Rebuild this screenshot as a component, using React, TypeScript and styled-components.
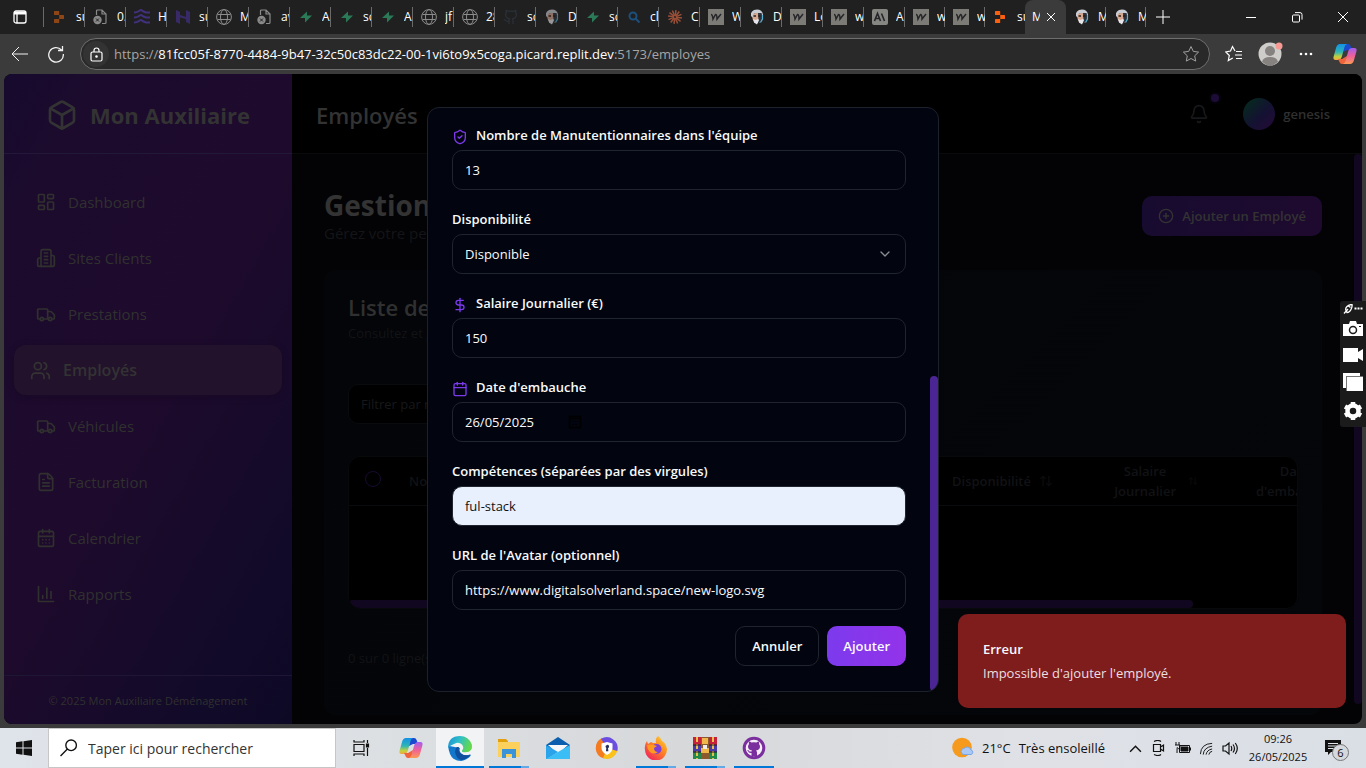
import React from "react";
import styled, { createGlobalStyle, css } from "styled-components";
import {
  ArrowUpDown,
  Bell,
  Box,
  Calendar,
  CalendarDays,
  ChevronDown,
  DollarSign,
  FileText,
  Github,
  LayoutDashboard,
  CirclePlus,
  ShieldCheck,
  Users,
} from "lucide-react";

const GlobalStyle = createGlobalStyle`
  *, *::before, *::after { box-sizing: border-box; }
  html, body { margin: 0; padding: 0; background: #3b3b3b; }
  body, button, input, select {
    font-family: "Open Sans", "Noto Sans", "Liberation Sans", sans-serif;
  }
  button { border: 0; padding: 0; background: none; color: inherit; cursor: pointer; }
  a { color: inherit; text-decoration: none; }
  svg { display: block; flex: none; }
`;

/* ---------- Browser chrome ---------- */

const Desktop = styled.div`
  display: flex;
  flex-direction: column;
  height: 100vh;
  min-height: 640px;
  overflow: hidden;
  background: #3b3b3b;
`;

const TabStrip = styled.header`
  display: flex;
  align-items: stretch;
  height: 34px;
  flex: none;
  background: #202020;
  color: #fff;
`;

const WorkspaceButton = styled.button`
  display: grid;
  place-items: center;
  width: 44px;
  padding-right: 4px;
  background: linear-gradient(#6a6a6a, #6a6a6a) right center / 1px 20px no-repeat;
`;

const Tab = styled.button<{ $narrow?: boolean; $plain?: boolean }>`
  display: flex;
  align-items: center;
  gap: 8px;
  width: ${(p) => (p.$narrow ? 40 : 41)}px;
  flex: none;
  overflow: hidden;
  padding-left: 8px;
  font-size: 12px;
  white-space: nowrap;
  color: #fff;
  background: linear-gradient(${(p) => (p.$plain ? "transparent, transparent" : "#6a6a6a, #6a6a6a")})
    right center / 1px 20px no-repeat;
`;

const TabLabel = styled.span`
  width: 8px;
  overflow: hidden;
  line-height: 18px;
  text-align: left;
`;

const ActiveTab = styled.div`
  display: flex;
  align-items: center;
  gap: 6px;
  width: 41px;
  flex: none;
  padding-left: 7px;
  border-radius: 8px 8px 0 0;
  background: #3b3b3b;
  font-size: 12px;
`;

const NewTab = styled.button`
  display: grid;
  place-items: center;
  width: 34px;
`;

const WindowButtons = styled.div`
  display: flex;
  margin-left: auto;
`;

const WindowButton = styled.button`
  display: grid;
  place-items: center;
  width: 46px;
`;

const Toolbar = styled.div`
  display: flex;
  align-items: center;
  height: 40px;
  flex: none;
  background: #3b3b3b;
  color: #f2f2f2;
`;

const ToolButton = styled.button<{ $width?: number }>`
  display: grid;
  place-items: center;
  width: ${(p) => p.$width ?? 36}px;
  height: 32px;
`;

const NavButtons = styled.div`
  display: flex;
  padding: 0 4px 0 2px;
`;

const AddressBar = styled.form`
  display: flex;
  align-items: center;
  flex: 1;
  height: 32px;
  margin: 0 6px 0 2px;
  padding: 0 9px 0 2px;
  border: 1px solid #6e6e6e;
  border-radius: 16px;
  background: #292929;
`;

const LockBadge = styled.span`
  display: grid;
  place-items: center;
  width: 26px;
  height: 26px;
  border-radius: 50%;
  background: #333;
`;

const UrlText = styled.a`
  flex: 1;
  margin-left: 5px;
  font-size: 13px;
  line-height: 20px;
  color: #a6a6a6;
  white-space: nowrap;
  b { font-weight: 400; color: #fff; }
`;

/* ---------- Page viewport ---------- */

const Viewport = styled.div`
  position: relative;
  display: flex;
  flex: 1;
  min-height: 0;
  margin: 0 4px 4px;
  border-radius: 8px;
  overflow: hidden;
  background: #030305;
`;

const Sidebar = styled.aside`
  display: flex;
  flex-direction: column;
  width: 288px;
  flex: none;
  color: #30312f;
  background: linear-gradient(120deg, #160a2e 0%, #1c0b2d 14%, #1e0a2c 50%, #120a29 84%, #0d0925 100%);
`;

const Brand = styled.div`
  display: flex;
  align-items: center;
  justify-content: center;
  gap: 12px;
  height: 80px;
  padding-top: 2px;
  border-bottom: 1px solid #221838;
  font-size: 22px;
  font-weight: 700;
  line-height: 32px;
  color: #333;
`;

const Nav = styled.nav`
  display: flex;
  flex: 1;
  flex-direction: column;
  gap: 8px;
  padding: 24px 16px;
`;

const NavItem = styled.a<{ $active?: boolean }>`
  display: flex;
  align-items: center;
  gap: 12px;
  height: 48px;
  padding: 0 16px;
  border-radius: 12px;
  font-size: 15px;
  line-height: 24px;
  ${(p) =>
    p.$active &&
    css`
      height: 50px;
      margin: -1px -6px;
      background: #22122b;
      box-shadow: 0 2px 6px #1a0927;
      font-size: 16px;
      font-weight: 600;
      color: #333;
    `}
`;

const SidebarFooter = styled.footer`
  height: 49px;
  border-top: 1px solid #1f1636;
  font-size: 11px;
  line-height: 50px;
  text-align: center;
`;

const Content = styled.div`
  display: flex;
  flex: 1;
  flex-direction: column;
  min-width: 0;
`;

const TopBar = styled.header`
  display: flex;
  align-items: center;
  height: 80px;
  flex: none;
  padding: 0 32px 0 24px;
  border-bottom: 1px solid #0a0a0c;
  background: #000;
`;

const TopTitle = styled.h1`
  flex: 1;
  margin: 0;
  padding-top: 2px;
  font-size: 22px;
  font-weight: 600;
  line-height: 32px;
  color: #333;
`;

const BellButton = styled.button`
  position: relative;
  display: grid;
  place-items: center;
  width: 40px;
  height: 40px;
  margin-right: 24px;
  color: #17181b;
`;

const BellDot = styled.span`
  position: absolute;
  top: 0;
  right: 0;
  width: 8px;
  height: 8px;
  border-radius: 50%;
  background: #1c0c38;
  box-shadow: 0 0 0 2px #05030a;
`;

const Profile = styled.button`
  display: flex;
  align-items: center;
  gap: 8px;
  font-size: 13px;
  font-weight: 600;
  color: #303030;
`;

const Avatar = styled.span`
  width: 32px;
  height: 32px;
  border-radius: 50%;
  background: linear-gradient(135deg, #05291e 10%, #141232 55%, #240a38 95%);
`;

const Scroller = styled.div`
  display: flex;
  flex: 1;
  min-height: 0;
`;

const Page = styled.main`
  flex: 1;
  min-width: 0;
  padding: 32px;
`;

const PageThumb = styled.span`
  width: 8px;
  margin-bottom: 20px;
  border-radius: 4px;
  background: #120720;
`;

const PageHead = styled.div`
  display: flex;
  align-items: center;
  justify-content: space-between;
  height: 64px;
`;

const PageHeading = styled.div`
  padding-bottom: 4px;
`;

const PageTitle = styled.h2`
  margin: 0;
  font-size: 28px;
  font-weight: 700;
  line-height: 34px;
  color: #333;
`;

const PageLead = styled.p`
  margin: 0;
  font-size: 15px;
  line-height: 22px;
  color: #141518;
`;

const AddEmployee = styled.button`
  display: flex;
  align-items: center;
  gap: 8px;
  height: 40px;
  padding: 0 16px;
  margin-bottom: 4px;
  border-radius: 10px;
  background: linear-gradient(90deg, #180b30, #1e0a2e);
  font-size: 13px;
  font-weight: 600;
  color: #333;
`;

const Card = styled.section`
  margin-top: 20px;
  padding: 24px;
  padding-bottom: 44px;
  border-radius: 12px;
  background: linear-gradient(135deg, #030508, #050609);
`;

const CardTitle = styled.h3`
  margin: 0;
  font-size: 22px;
  font-weight: 600;
  line-height: 26px;
  color: #303030;
`;

const CardLead = styled.p`
  margin: 2px 0 40px;
  font-size: 13px;
  line-height: 22px;
  color: #121316;
`;

const Filter = styled.input`
  display: block;
  width: 384px;
  height: 40px;
  padding: 0 12px;
  border: 1px solid #0a0b0e;
  border-radius: 10px;
  background: #000;
  font-size: 13px;
  color: #333;
  &::placeholder { color: #17181b; opacity: 1; }
`;

const TableBox = styled.div`
  height: 153px;
  margin-top: 32px;
  border: 1px solid #08090b;
  border-radius: 12px;
  background: #000;
  overflow: hidden;
  display: flex;
  flex-direction: column;
`;

const TableScroll = styled.div`
  flex: 1;
  overflow: hidden;
`;

const Table = styled.table`
  width: calc(100% + 104px);
  table-layout: fixed;
  border-collapse: collapse;
`;

const Th = styled.th<{ $width?: number }>`
  width: ${(p) => (p.$width ? p.$width + "px" : "auto")};
  height: 48px;
  padding: 0 12px;
  border-bottom: 1px solid #0a0b0d;
  font-size: 13px;
  font-weight: 600;
  line-height: 20px;
  text-align: left;
  color: #111215;
`;

const Sortable = styled.span<{ $align?: string }>`
  display: flex;
  align-items: center;
  justify-content: ${(p) => p.$align ?? "flex-start"};
  gap: ${(p) => (p.$align === "flex-end" ? 12 : 8)}px;
  text-align: center;
  svg { color: #0c0d0f; }
`;

const RoundCheck = styled.input`
  appearance: none;
  display: block;
  width: 16px;
  height: 16px;
  margin: 0 0 4px 4px;
  border: 1px solid #180b30;
  border-radius: 50%;
`;

const TableThumb = styled.span`
  width: 89%;
  height: 8px;
  border-radius: 4px;
  background: #120720;
`;

const Selection = styled.p`
  margin: 36px 0 0;
  font-size: 13px;
  line-height: 26px;
  color: #121316;
`;

/* ---------- Dialog ---------- */

const DialogLayer = styled.div`
  position: absolute;
  inset: 0;
  display: grid;
  place-items: center;
`;

const Dialog = styled.div`
  display: flex;
  width: 512px;
  height: 90%;
  border: 1px solid #1c212c;
  border-radius: 12px;
  background: #02050f;
  overflow: hidden;
  color: #f8fafc;
`;

const Form = styled.form`
  display: flex;
  flex: 1;
  flex-direction: column;
  justify-content: flex-end;
  gap: 16px;
  padding: 0 24px 25px;
`;

const Field = styled.div`
  display: flex;
  flex-direction: column;
  height: 68px;
`;

const Label = styled.label`
  display: flex;
  align-items: center;
  gap: 8px;
  height: 28px;
  padding-bottom: 2px;
  font-size: 13px;
  font-weight: 600;
  line-height: 20px;
  svg { color: #7c3aed; position: relative; top: 2px; }
`;

const ControlBox = styled.div<{ $filled?: boolean }>`
  display: flex;
  align-items: center;
  height: 40px;
  padding: 0 12px;
  border: 1px solid #20242e;
  border-radius: 10px;
  background: ${(p) => (p.$filled ? "#e8f0fe" : "transparent")};
  color: ${(p) => (p.$filled ? "#111" : "#f8fafc")};
`;

const control = css`
  min-width: 0;
  height: 38px;
  padding: 0;
  border: 0;
  outline: 0;
  background: transparent;
  font-size: 13px;
  color: inherit;
`;

const TextInput = styled.input<{ $short?: boolean }>`
  ${control}
  ${(p) => (p.$short ? "width: 102px;" : "flex: 1;")}
`;

const Select = styled.select`
  ${control}
  flex: 1;
  appearance: none;
`;

const Actions = styled.div`
  display: flex;
  justify-content: flex-end;
  gap: 8px;
`;

const ActionButton = styled.button<{ $primary?: boolean }>`
  height: 40px;
  padding: 0 16px;
  border: ${(p) => (p.$primary ? "0" : "1px solid #20242e")};
  border-radius: 10px;
  background: ${(p) => (p.$primary ? "linear-gradient(90deg, #7c3aed, #9333ea)" : "transparent")};
  font-size: 13px;
  font-weight: 600;
  color: #f8fafc;
`;

const DialogTrack = styled.div`
  display: flex;
  flex-direction: column;
  justify-content: flex-end;
  width: 8px;
`;

const DialogThumb = styled.span`
  height: 54%;
  border-radius: 4px;
  background: #4c2594;
`;

const Toast = styled.div`
  position: absolute;
  right: 16px;
  bottom: 16px;
  width: 388px;
  padding: 23px 25px;
  border-radius: 10px;
  background: #7f1d1d;
  font-size: 13px;
  line-height: 24px;
  color: #f8fafc;
`;

const ToastTitle = styled.strong`
  display: block;
  font-weight: 600;
`;

const ToastText = styled.span`
  display: block;
  color: #ecdfe0;
`;

const CaptureBar = styled.div`
  position: fixed;
  right: 0;
  top: 301px;
  display: flex;
  flex-direction: column;
  align-items: center;
  gap: 11px;
  width: 26px;
  height: 126px;
  padding: 3px 2px 6px;
  border-radius: 3px 0 0 3px;
  background: #1b1b1b;
  color: #fff;
`;

const CaptureHandle = styled.span`
  height: 6px;
`;

/* ---------- Taskbar ---------- */

const Taskbar = styled.footer`
  display: flex;
  align-items: stretch;
  height: 40px;
  flex: none;
  background: linear-gradient(90deg, #dfe3ea, #dcdfe2 30%, #d6d8da 50%, #dfe1e6 75%, #dadfe6);
  color: #111;
`;

const TaskButton = styled.button<{ $width?: number; $active?: boolean; $running?: boolean; $more?: boolean }>`
  display: grid;
  place-items: center;
  width: ${(p) => p.$width ?? 49}px;
  background: ${(p) =>
    p.$active
      ? "linear-gradient(#0078d7, #0078d7) center bottom / 100% 2px no-repeat, #f2f3f4"
      : p.$more
        ? "linear-gradient(90deg, #0078d7 80%, #62a9e6 80%) center bottom / 40px 2px no-repeat"
        : p.$running
          ? "linear-gradient(#0078d7, #0078d7) center bottom / 40px 2px no-repeat"
          : "transparent"};
`;

const TaskSearch = styled.label`
  display: flex;
  align-items: center;
  gap: 10px;
  width: 288px;
  padding-left: 11px;
  border: 1px solid #c6c6c6;
  background: #fff;
`;

const TaskSearchInput = styled.input`
  flex: 1;
  min-width: 0;
  padding: 0;
  border: 0;
  outline: 0;
  background: transparent;
  font-size: 14px;
  &::placeholder { color: #333; opacity: 1; }
`;

const Tray = styled.div`
  display: flex;
  align-items: center;
  margin-left: auto;
  padding-right: 17px;
`;

const Weather = styled.button`
  display: flex;
  align-items: center;
  gap: 8px;
  margin-right: 24px;
  font-size: 13px;
  color: #111;
`;

const TrayIcons = styled.div`
  display: flex;
  align-items: center;
  gap: 8px;
`;

const Clock = styled.time`
  width: 78px;
  font-size: 11px;
  line-height: 18px;
  text-align: center;
`;

const Notifications = styled.button`
  position: relative;
  margin-left: 8px;
  width: 24px;
  height: 24px;
`;

const NotificationCount = styled.span`
  position: absolute;
  left: 7px;
  top: 8px;
  width: 17px;
  height: 17px;
  border: 1px solid #777;
  border-radius: 50%;
  background: #d5d8dc;
  font-size: 11px;
  line-height: 15px;
  text-align: center;
`;

/* ---------- Drawings ---------- */

type FavKind =
  | "replit" | "replitOn" | "file" | "waves" | "hbar" | "globe" | "bolt"
  | "github" | "face" | "faceOn" | "search" | "burst" | "zig" | "slash";

const burstAngles = [0, 30, 60, 90, 120, 150, 180, 210, 240, 270, 300, 330];

function Favicon({ kind }: { kind: FavKind }) {
  if (kind === "globe") {
    return (
      <svg width="16" height="16" viewBox="0 0 16 16" fill="none" stroke="#8c8c8c">
        <circle cx="8" cy="8" r="7.400" />
        <ellipse cx="8" cy="8" rx="3.500" ry="7.400" />
        <path d="M1.500 5.500h13M1.500 10.500h13" />
      </svg>
    );
  }
  if (kind === "github") return <Github size={16} color="#2a3038" />;
  return (
    <svg width="16" height="16" viewBox="0 0 16 16" fill="none">
      {(kind === "replit" || kind === "replitOn") && (
        <path
          fill={kind === "replit" ? "#8f4617" : "#fb6010"}
          d="M2 2.600c0-.4.3-.6.6-.6h4c.4 0 .6.2.6.6V6H2.600Q2 6 2 5.400zM7.200 6h4.200c.4 0 .6.2.6.6v2.800c0 .4-.2.6-.6.600H7.200zM2 10.600c0-.4.3-.6.6-.6h4.600v3.400c0 .4-.2.600-.6.600h-4c-.3 0-.6-.2-.6-.600z"
        />
      )}
      {kind === "search" && (
        <>
          <circle cx="7" cy="7" r="3.500" stroke="#1d4f7c" strokeWidth="2" />
          <path d="m9.500 9.500 4 4" stroke="#1d4f7c" strokeWidth="2" />
        </>
      )}
      {kind === "file" && (
        <>
          <path d="M3.500 6V2q0-1 1-1H9l4 4v8.500q0 1-1 1H9M9 1v4h4" stroke="#8a8a8a" strokeWidth="1.200" />
          <circle cx="4.500" cy="11" r="4.200" fill="#8a8a8a" />
          <path d="m3 9.500 3 3m0-3-3 3" stroke="#202020" />
        </>
      )}
      {kind === "waves" && (
        <path d="M0 3.500q3 0 5-1.500t3-.5 4 2h4M0 8.500q3 0 5-1.500t3-.5 4 2h4M0 13.500q3 0 5-1.500t3-.5 4 2h4" stroke="#41307c" strokeWidth="2" />
      )}
      {kind === "hbar" && (
        <path fill="#382a66" d="M1 1l4 2v3l6 2V1l4 2v12l-4-2v-3L5 8.500V15l-4-2z" />
      )}
      {kind === "bolt" && <path fill="#2a7a58" d="M9 2.500v4h5l-7 7v-4.500H2z" />}
      {(kind === "face" || kind === "faceOn") && (
        <g opacity={kind === "face" ? 0.6 : 1}>
          <path fill="#c9ccd2" d="M2 7Q1 1 8 .500q5 0 6 5l-1 3-2-4H5L4 9z" />
          <path fill="#d9a890" d="M4 5q4-2 8 0l.5 5-2 4H6L3.500 10z" />
          <path fill="#2b3440" d="M9 4h3.500l1 4-2 5-3 2 1-4z" />
          <path d="M4.500 7h2.500M9 7h2.500" stroke="#2a1c1a" strokeWidth="1.300" />
          <path fill="#e6e6ea" d="M4 10l2.500 1L9 10l1 1-2 4.500-3-2z" />
          <path d="M13.500 6v4l-2 3.500" stroke="#58b4d4" strokeWidth="1.200" />
        </g>
      )}
      {kind === "burst" &&
        burstAngles.map((a) => (
          <path key={a} d="M8 7V1" stroke="#9a4f38" strokeWidth="1.500" transform={`rotate(${a + 8} 8 8)`} />
        ))}
      {kind === "zig" && (
        <>
          <path fill="#7d7b76" d="M0 0h16v16H0z" />
          <path d="M3 5.500q1.500 0 2 4.500l2.500-4.500q1.500 0 1.500 4.500l4-5" stroke="#26262a" strokeWidth="1.500" />
        </>
      )}
      {kind === "slash" && (
        <>
          <rect width="16" height="16" rx="2" fill="#868683" />
          <path d="M2.500 12 5.500 4.500l3 7.500M4 9.500h3.500M9.500 4.500l3 7.500" stroke="#26262a" strokeWidth="1.600" />
        </>
      )}
    </svg>
  );
}

function Copilot() {
  return (
    <svg width="24" height="24" viewBox="0 0 24 24">
      <defs>
        <linearGradient id="cpA" x1="0" y1="0" x2="0" y2="1">
          <stop offset="0" stopColor="#1391e6" />
          <stop offset=".5" stopColor="#2fb5b5" />
          <stop offset=".8" stopColor="#c6d23c" />
          <stop offset="1" stopColor="#f0a53a" />
        </linearGradient>
        <linearGradient id="cpB" x1="0" y1="0" x2="0" y2="1">
          <stop offset="0" stopColor="#a05ef0" />
          <stop offset=".5" stopColor="#f0609a" />
          <stop offset="1" stopColor="#fb9a55" />
        </linearGradient>
      </defs>
      <path fill="#1a49d0" d="M11 2h4q2 0 2.600 2L19 8h-5l-4 2z" />
      <path fill="url(#cpA)" d="M7 2h7q-2 1-2.500 3L9 14q-1 4-4 4H2.500Q0 18 .500 15L3 6q1-4 4-4z" />
      <path fill="#f0643c" d="M13 22H9q-2 0-2.500-2L5 17h4l5-3z" />
      <path fill="url(#cpB)" d="M17 22h-7q2-1 2.500-3L15 10q1-4 4-4h2.500Q24 6 23.500 9L21 18q-1 4-4 4z" />
    </svg>
  );
}

function EdgeLogo() {
  return (
    <svg width="26" height="26" viewBox="0 0 24 24">
      <defs>
        <linearGradient id="edA" x1="0" y1="0" x2="1" y2=".3">
          <stop offset="0" stopColor="#1a8fd8" />
          <stop offset=".5" stopColor="#2fbfc8" />
          <stop offset="1" stopColor="#62d84e" />
        </linearGradient>
      </defs>
      <path fill="#1378cc" d="M1 10q1 9 5 12 3 2 7 2 6-1 9-5l-1-1q-5 2-8-1-2-2-1-5z" />
      <path fill="url(#edA)" d="M1 12Q1 1 12 1q8 0 11 8 1 7-6 7-4 0-3-2 2-2 0-5-3-3-7-1-4 1-6 4z" />
      <path fill="#0e4f9e" d="M9 11q-3 4 0 9 2 3 5 3 5-1 8-5-5 2-9-1-3-2-2-6z" />
    </svg>
  );
}

const ExplorerLogo = () => (
  <svg width="24" height="24" viewBox="0 0 24 24">
    <path fill="#e0a10c" d="M1 3h8l2 2v4H1z" />
    <path fill="#fbd05c" d="M1 6h22v15H1z" />
    <path fill="#3a92d8" d="M5 13h14v9h-4v-4H9v4H5z" />
  </svg>
);

const MailLogo = () => (
  <svg width="24" height="24" viewBox="0 0 24 24">
    <path fill="#0b5fae" d="M0 9 12 1l12 8v4H0z" />
    <path fill="#f6f8fa" d="M2 9h20l-10 9z" />
    <path fill="#2aa3ea" d="M0 9l12 7-11 7H0z" />
    <path fill="#3bbdf5" d="M24 9 0 23h24z" />
  </svg>
);

const ShieldLogo = () => (
  <svg width="24" height="24" viewBox="0 0 24 24">
    <path fill="#f47b20" d="M12 12 7 2A11 11 0 0 0 9 22.600z" />
    <path fill="#fbc21c" d="M12 12 8 22.300A11 11 0 0 0 22.500 14z" />
    <path fill="#6b4ee0" d="M12 12 6 2.800A11 11 0 0 1 22.300 15z" />
    <path fill="#fff" d="m12 6 5.500 1.500V12q0 4-5.500 7-5.500-3-5.500-7V7.500z" />
    <path fill="#27315c" d="M10.500 10.800a1.800 1.800 0 1 1 2.500 1.500l.4 3h-2.500l.4-3z" />
  </svg>
);

const FirefoxLogo = () => (
  <svg width="24" height="24" viewBox="0 0 24 24">
    <defs>
      <linearGradient id="ffA" x1="1" y1="0" x2=".2" y2="1">
        <stop offset="0" stopColor="#ffe43a" />
        <stop offset=".45" stopColor="#ff8a1e" />
        <stop offset="1" stopColor="#f0205e" />
      </linearGradient>
    </defs>
    <path fill="url(#ffA)" d="M14 0q3 2 4 5 4 2 5 8a11 11 0 0 1-22 1Q0 9 3 5l1 3 3-2 2 1 3 0q-1-5 2-7z" />
    <circle cx="12.500" cy="13" r="5" fill="#7b3fd8" />
    <path fill="#ff9a20" d="M3 9q4-1 7 0l3 1-3 2q0 4 4 4-4 3-8 0-3-3-3-7z" />
  </svg>
);

const WinrarLogo = () => (
  <svg width="26" height="24" viewBox="0 0 26 24">
    <path fill="#c6203a" d="M1 1h24v8H1z" />
    <path fill="#4a3aa8" d="M1 9h24v7H1z" />
    <path fill="#1f8a4a" d="M1 16h24v7H1z" />
    <path d="M5 1v22M21 1v22" stroke="#e8c04a" strokeWidth="2" strokeDasharray="5 2" />
    <path d="M1 9h24M1 16h24" stroke="#2a1a1a" />
    <path fill="#8c5a2c" d="M9 1h8v22H9z" />
    <path fill="#f0b84a" d="M10 2h6v6h-6zM9 12h8v5H9z" />
    <path d="M11 9h4v4h-4z" fill="#eee" />
  </svg>
);

const GithubDesktopLogo = () => (
  <svg width="24" height="24" viewBox="0 0 24 24">
    <circle cx="12" cy="12" r="9.800" fill="#f4eef8" stroke="#7b2f9e" strokeWidth="3" />
    <path fill="#7b2f9e" d="M9.500 20v-3q-3 .500-3.500-2l-1-1q2-.500 2.500 1.500H9.500l.5-1q-4-.500-4-4 0-1.500 1-2.500-.5-1.500 0-2.500 1.500 0 2.500 1 2-.500 5 0 1-1 2.500-1 .5 1.500 0 2.500 1 1 1 2.500 0 3.500-4 4 1 1 1 2V20z" />
  </svg>
);

const TruckIcon = () => (
  <svg width="20" height="20" viewBox="0 0 24 24" fill="none" stroke="currentColor" strokeWidth="2" strokeLinecap="round" strokeLinejoin="round">
    <path d="M5 18H3c-.6 0-1-.4-1-1V7c0-.6.4-1 1-1h10c.6 0 1 .4 1 1v11M14 9h4l4 4v4c0 .6-.4 1-1 1h-2M15 18H9" />
    <circle cx="7" cy="18" r="2" />
    <circle cx="17" cy="18" r="2" />
  </svg>
);

const BuildingIcon = () => (
  <svg width="20" height="20" viewBox="0 0 24 24" fill="none" stroke="currentColor" strokeWidth="2" strokeLinecap="round" strokeLinejoin="round">
    <path d="M6 22V4a2 2 0 0 1 2-2h8a2 2 0 0 1 2 2v18ZM6 12H4a2 2 0 0 0-2 2v6a2 2 0 0 0 2 2h2M18 9h2a2 2 0 0 1 2 2v9a2 2 0 0 1-2 2h-2M10 6h4M10 10h4M10 14h4M10 18h4" />
  </svg>
);

const ChartIcon = () => (
  <svg width="20" height="20" viewBox="0 0 24 24" fill="none" stroke="currentColor" strokeWidth="2" strokeLinecap="round" strokeLinejoin="round">
    <path d="M3 3v18h18M18 17V9M13 17V5M8 17v-3" />
  </svg>
);

const PickerIcon = () => (
  <svg width="16" height="16" viewBox="0 0 16 16" fill="none" stroke="#000">
    <path d="M2.500 2.500h11v11h-11zM2.500 4.500h11" strokeWidth="1.500" />
    <path d="M5 7.500h6M5 10.500h6" strokeDasharray="2 1" />
  </svg>
);

const Line = ({ d, size = 16, width = 1, box = 16 }: { d: string; size?: number; width?: number; box?: number }) => (
  <svg width={size} height={size} viewBox={`0 0 ${box} ${box}`} fill="none" stroke="currentColor" strokeWidth={width}>
    <path d={d} />
  </svg>
);

const STAR = "M9 1.500l2.300 4.900 5.300.7-3.900 3.700 1 5.300L9 13.500l-4.700 2.600 1-5.300L1.400 7.100l5.300-.7z";

/* ---------- Data ---------- */

const leftTabs: [FavKind, string][] = [
  ["replit", "su"], ["file", "0."], ["waves", "H"], ["hbar", "su"], ["globe", "M"], ["file", "av"],
  ["bolt", "A"], ["bolt", "sc"], ["bolt", "A"], ["globe", "jf"], ["globe", "28"], ["github", "sc"],
  ["face", "D"], ["bolt", "sc"], ["search", "cl"], ["burst", "C"], ["zig", "W"], ["faceOn", "D"],
  ["zig", "Lo"], ["zig", "w"], ["slash", "A"], ["zig", "w"], ["zig", "w"], ["replitOn", "su"],
];

const rightTabs: [FavKind, string][] = [["faceOn", "M"], ["faceOn", "M"]];

const navItems: { label: string; icon: React.ReactNode; active?: boolean }[] = [
  { label: "Dashboard", icon: <LayoutDashboard size={20} /> },
  { label: "Sites Clients", icon: <BuildingIcon /> },
  { label: "Prestations", icon: <TruckIcon /> },
  { label: "Employés", icon: <Users size={21} />, active: true },
  { label: "Véhicules", icon: <TruckIcon /> },
  { label: "Facturation", icon: <FileText size={20} /> },
  { label: "Calendrier", icon: <CalendarDays size={20} /> },
  { label: "Rapports", icon: <ChartIcon /> },
];

export default function App() {
  return (
    <Desktop>
      <GlobalStyle />
      <TabStrip>
        <WorkspaceButton aria-label="Espaces de travail">
          <svg width="14" height="14" viewBox="0 0 14 14" fill="none" stroke="#fff" strokeWidth="1.300">
            <rect x="1" y="1" width="12" height="12" rx="2" />
            <path d="M1 3h12" strokeWidth="3" />
            <path d="M4 4v9" />
          </svg>
        </WorkspaceButton>
        {leftTabs.map(([kind, label], i) => (
          <Tab key={i} $narrow={i > 20} $plain={i === leftTabs.length - 1}>
            <Favicon kind={kind} />
            <TabLabel>{label}</TabLabel>
          </Tab>
        ))}
        <ActiveTab>
          <TabLabel>M</TabLabel>
          <button aria-label="Fermer l'onglet">
            <Line d="M1 1l8 8M9 1l-8 8" box={10} size={10} width={1} />
          </button>
        </ActiveTab>
        {rightTabs.map(([kind, label], i) => (
          <Tab key={i} $narrow>
            <Favicon kind={kind} />
            <TabLabel>{label}</TabLabel>
          </Tab>
        ))}
        <NewTab aria-label="Nouvel onglet">
          <Line d="M7 0v14M0 7h14" box={14} size={14} width={1} />
        </NewTab>
        <WindowButtons>
          <WindowButton aria-label="Réduire"><Line d="M0 5.500h10" box={10} size={10} /></WindowButton>
          <WindowButton aria-label="Restaurer">
            <Line d="M1.500 3h5q1 0 1 1v5q0 1-1 1h-5q-1 0-1-1V4q0-1 1-1zM3 .600h5q2 0 2 2v5" box={11} size={11} />
          </WindowButton>
          <WindowButton aria-label="Fermer"><Line d="M0 0l10 10M10 0 0 10" box={10} size={10} /></WindowButton>
        </WindowButtons>
      </TabStrip>

      <Toolbar>
        <NavButtons>
          <ToolButton aria-label="Retour"><Line d="M17 9H1M8 2 1 9l7 7" box={18} size={18} width={1} /></ToolButton>
          <ToolButton aria-label="Actualiser">
            <Line d="M14.500 5A7.300 7.300 0 1 0 16.300 9M15.500 1v4.500H11" box={18} size={18} width={1.300} />
          </ToolButton>
        </NavButtons>
        <AddressBar>
          <LockBadge>
            <svg width="13" height="15" viewBox="0 0 13 15" fill="none" stroke="#fff" strokeWidth="1.200">
              <rect x="1" y="5" width="11" height="9" rx="1.500" />
              <path d="M4 5V3.500a2.500 2.500 0 0 1 5 0V5" />
              <circle cx="6.500" cy="9.500" r=".7" fill="#fff" />
            </svg>
          </LockBadge>
          <UrlText href="#">
            https://<b>81fcc05f-8770-4484-9b47-32c50c83dc22-00-1vi6to9x5coga.picard.replit.dev</b>:5173/employes
          </UrlText>
          <svg width="18" height="18" viewBox="0 0 18 18" fill="none" stroke="#a0a0a0"><path d={STAR} /></svg>
        </AddressBar>
        <ToolButton aria-label="Favoris">
          <svg width="18" height="18" viewBox="0 0 18 18" fill="none" stroke="#fff" strokeWidth="1.200">
            <path d="M10 6 7.500 1.500 5.500 6 .800 7l3.500 3.500-1 5 4.500-2.500M11 6.500h6M10 10h7M11 13.500h6" />
          </svg>
        </ToolButton>
        <ToolButton aria-label="Profil">
          <svg width="26" height="26" viewBox="0 0 26 26">
            <circle cx="13" cy="13" r="11.500" fill="#cfcdca" />
            <circle cx="13" cy="10" r="5" fill="#85827f" />
            <path fill="#85827f" d="M5 21q1-5 8-5t8 5q-8 7-16 0z" />
            <circle cx="22" cy="5" r="3.500" fill="#f79a94" />
          </svg>
        </ToolButton>
        <ToolButton aria-label="Paramètres">
          <svg width="14" height="4" viewBox="0 0 14 4" fill="#fff">
            <circle cx="2" cy="2" r="1.300" /><circle cx="7" cy="2" r="1.300" /><circle cx="12" cy="2" r="1.300" />
          </svg>
        </ToolButton>
        <ToolButton aria-label="Copilot" $width={42}><Copilot /></ToolButton>
      </Toolbar>

      <Viewport>
        <Sidebar>
          <Brand><Box size={32} /><span>Mon Auxiliaire</span></Brand>
          <Nav>
            {navItems.map((item) => (
              <NavItem key={item.label} href="#" $active={item.active}>
                {item.icon}
                <span>{item.label}</span>
              </NavItem>
            ))}
          </Nav>
          <SidebarFooter>© 2025 Mon Auxiliaire Déménagement</SidebarFooter>
        </Sidebar>

        <Content>
          <TopBar>
            <TopTitle>Employés</TopTitle>
            <BellButton aria-label="Notifications"><Bell size={20} /><BellDot /></BellButton>
            <Profile><Avatar /><span>genesis</span></Profile>
          </TopBar>
          <Scroller>
            <Page>
              <PageHead>
                <PageHeading>
                  <PageTitle>Gestion</PageTitle>
                  <PageLead>Gérez votre personnel</PageLead>
                </PageHeading>
                <AddEmployee><CirclePlus size={16} />Ajouter un Employé</AddEmployee>
              </PageHead>
              <Card>
                <CardTitle>Liste des</CardTitle>
                <CardLead>Consultez et gérez</CardLead>
                <Filter aria-label="Filtrer par nom" placeholder="Filtrer par nom" />
                <TableBox>
                  <TableScroll>
                    <Table>
                      <thead>
                        <tr>
                          <Th $width={48}><RoundCheck type="checkbox" aria-label="Tout sélectionner" /></Th>
                          <Th $width={140}>Nom</Th>
                          <Th />
                          <Th $width={139}><Sortable>Disponibilité<ArrowUpDown size={14} /></Sortable></Th>
                          <Th $width={131}>
                            <Sortable $align="flex-end">
                              <span>Salaire<br />Journalier</span>
                              <ArrowUpDown size={10} />
                            </Sortable>
                          </Th>
                          <Th $width={191}>
                            <Sortable $align="center">
                              <span>Date<br />d'embauche</span>
                              <ArrowUpDown size={14} />
                            </Sortable>
                          </Th>
                        </tr>
                      </thead>
                    </Table>
                  </TableScroll>
                  <TableThumb />
                </TableBox>
                <Selection>0 sur 0 ligne(s)</Selection>
              </Card>
            </Page>
            <PageThumb />
          </Scroller>
        </Content>

        <DialogLayer>
          <Dialog role="dialog" aria-label="Ajouter un employé">
            <Form>
              <Field>
                <Label htmlFor="handlers"><ShieldCheck size={16} />Nombre de Manutentionnaires dans l'équipe</Label>
                <ControlBox><TextInput id="handlers" defaultValue="13" /></ControlBox>
              </Field>
              <Field>
                <Label htmlFor="availability">Disponibilité</Label>
                <ControlBox>
                  <Select id="availability"><option>Disponible</option></Select>
                  <ChevronDown size={16} color="#8a8d94" />
                </ControlBox>
              </Field>
              <Field>
                <Label htmlFor="salary"><DollarSign size={16} />Salaire Journalier (€)</Label>
                <ControlBox><TextInput id="salary" defaultValue="150" /></ControlBox>
              </Field>
              <Field>
                <Label htmlFor="hired"><Calendar size={16} />Date d'embauche</Label>
                <ControlBox>
                  <TextInput id="hired" $short defaultValue="26/05/2025" />
                  <PickerIcon />
                </ControlBox>
              </Field>
              <Field>
                <Label htmlFor="skills">Compétences (séparées par des virgules)</Label>
                <ControlBox $filled><TextInput id="skills" defaultValue="ful-stack" /></ControlBox>
              </Field>
              <Field>
                <Label htmlFor="avatar">URL de l'Avatar (optionnel)</Label>
                <ControlBox>
                  <TextInput id="avatar" defaultValue="https://www.digitalsolverland.space/new-logo.svg" />
                </ControlBox>
              </Field>
              <Actions>
                <ActionButton type="button">Annuler</ActionButton>
                <ActionButton type="button" $primary>Ajouter</ActionButton>
              </Actions>
            </Form>
            <DialogTrack><DialogThumb /></DialogTrack>
          </Dialog>
        </DialogLayer>

        <Toast role="alert">
          <ToastTitle>Erreur</ToastTitle>
          <ToastText>Impossible d'ajouter l'employé.</ToastText>
        </Toast>
      </Viewport>

      <CaptureBar>
        <CaptureHandle>
          <svg width="20" height="10" viewBox="0 0 20 10" fill="none" stroke="#fff">
            <path d="M1 9.500 5 5M3 6.500q-1-2 1-4t5-2q.5 2-1 5t-4 3zM5.500 2l2 1.500" strokeWidth="1.300" />
            <path d="M11.500 4.500h8" strokeWidth="2" strokeDasharray="2 1" />
          </svg>
        </CaptureHandle>
        <svg width="20" height="16" viewBox="0 0 20 16">
          <path fill="#fff" d="M0 3h6l1-3h6l1 3h6v12H0z" />
          <circle cx="10" cy="9" r="3.500" fill="#fff" stroke="#1b1b1b" strokeWidth="1.500" />
          <path fill="#1b1b1b" d="M16 5h2v1h-2z" />
        </svg>
        <svg width="20" height="14" viewBox="0 0 20 14" fill="#fff"><path d="M0 0h15v4l5-3v12l-5-3v4H0z" /></svg>
        <svg width="20" height="18" viewBox="0 0 20 18">
          <path fill="#fff" d="M0 0h17v3H3v12H0z" />
          <path fill="#fff" stroke="#777" d="M3.500 3.500h17v15h-17z" />
        </svg>
        <svg width="20" height="20" viewBox="0 1 20 20" fill="none">
          <circle cx="10" cy="10" r="5.500" stroke="#fff" strokeWidth="4.500" />
          <path d="M10 1v4M10 15v4M2 5.500l3.500 2M14.500 12.500l3.500 2M2 14.500l3.500-2M14.500 7.500l3.500-2" stroke="#fff" strokeWidth="4.500" />
        </svg>
      </CaptureBar>

      <Taskbar>
        <TaskButton $width={48} aria-label="Démarrer">
          <svg width="16" height="16" viewBox="0 0 16 16" fill="#111">
            <path d="M0 2.200 6.500 1.300v6.200H0zM7.500 1.200 16 0v7.500H7.500zM0 8.500h6.500v6.200L0 13.800zM7.500 8.500H16V16l-8.500-1.200z" />
          </svg>
        </TaskButton>
        <TaskSearch>
          <Line d="M15.500 6A5 5 0 1 1 5.500 6a5 5 0 0 1 10 0M7 9.500.500 16" width={1.300} size={18} box={17} />
          <TaskSearchInput aria-label="Rechercher" placeholder="Taper ici pour rechercher" />
        </TaskSearch>
        <TaskButton $width={50} aria-label="Vue des tâches">
          <svg width="17" height="16" viewBox="0 0 17 16" fill="none" stroke="#111" strokeWidth="1.200">
            <path d="M1 4.500h10v7H1zM1 0v2h10V0M1 16v-2h10v2M14.500 0v3M14.500 8v8" />
            <path d="M13.500 4h2v3h-2z" fill="#111" />
          </svg>
        </TaskButton>
        <TaskButton $width={50} aria-label="Copilot"><Copilot /></TaskButton>
        <TaskButton $width={48} $active aria-label="Microsoft Edge"><EdgeLogo /></TaskButton>
        <TaskButton $more aria-label="Explorateur de fichiers"><ExplorerLogo /></TaskButton>
        <TaskButton aria-label="Courrier"><MailLogo /></TaskButton>
        <TaskButton aria-label="Navigateur sécurisé"><ShieldLogo /></TaskButton>
        <TaskButton $more aria-label="Firefox"><FirefoxLogo /></TaskButton>
        <TaskButton $more aria-label="WinRAR"><WinrarLogo /></TaskButton>
        <TaskButton $running aria-label="GitHub Desktop"><GithubDesktopLogo /></TaskButton>
        <Tray>
          <Weather>
            <svg width="22" height="22" viewBox="0 0 22 22">
              <circle cx="10" cy="10.500" r="9.800" fill="#f59a1c" />
              <path fill="#a9c8f5" stroke="#7ba6e6" d="M12 17.500a3 3 0 0 1 0-6 4 4 0 0 1 7 1.500 2.300 2.300 0 0 1 0 4.500z" />
            </svg>
            <span>21°C</span>
            <span>Très ensoleillé</span>
          </Weather>
          <TrayIcons>
            <Line d="M1 9l5-5 5 5" box={12} size={13} width={1.300} />
            <Line d="M3.500 4.500h7v7h-7zM10.500 7l3-2v6l-3-2M4 1.500q4-2 7 0M4 14.500q4 2 7 0" width={1.200} size={16} />
            <svg width="17" height="14" viewBox="0 0 17 14" fill="none" stroke="#111">
              <path d="M5.500 4.500h10v7h-10zM2 1v3M5 1v3M1 4h5v2q-2 3-2.500 1T3 12" />
              <path fill="#111" d="M7 6h7v4H7zM16 7h1v2h-1z" />
            </svg>
            <Line d="M1.500 14Q2 3 14 2.500M4.500 14.500Q5 7 14 5.500M7.500 14.500q1-5 6.500-6M10.500 14.500q.500-3 3.500-3.500" width={1} size={15} />
            <Line d="M1 6h2.500L7 3v11l-3.500-3H1zM9 6q1.500 2.500 0 5M11 4.500q3 4 0 8M13.300 3q4 5.500 0 11" box={17} size={17} width={1.200} />
          </TrayIcons>
          <Clock>09:26<br />26/05/2025</Clock>
          <Notifications aria-label="Notifications système">
            <svg width="16" height="16" viewBox="0 0 16 16">
              <path fill="#111" d="M0 0h16v12H6l-3 3v-3H0z" />
              <path d="M3 3.500h10M3 6h10M3 8.500h7" stroke="#dfe3e8" />
            </svg>
            <NotificationCount>6</NotificationCount>
          </Notifications>
        </Tray>
      </Taskbar>
    </Desktop>
  );
}
